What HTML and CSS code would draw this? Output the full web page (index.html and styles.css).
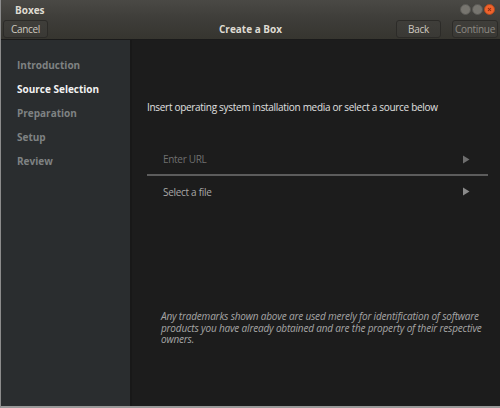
FILE: index.html
```html
<!DOCTYPE html>
<html>
<head>
<meta charset="utf-8">
<link rel="stylesheet" href="styles.css">
</head>
<body>
<div class="window">
  <div class="titlebar">
    <span class="title">Boxes</span>
    <div class="wm-buttons">
      <span class="wm wm-min"></span>
      <span class="wm wm-max"></span>
      <span class="wm wm-close">
        <svg width="12" height="12" viewBox="0 0 12 12"><path d="M4 4 L8 8 M8 4 L4 8" stroke="#8a2a10" stroke-width="1.4"/></svg>
      </span>
    </div>
  </div>
  <div class="headerbar">
    <button class="btn btn-cancel">Cancel</button>
    <div class="hb-title">Create a Box</div>
    <div class="hb-right">
      <button class="btn btn-back">Back</button>
      <button class="btn btn-disabled">Continue</button>
    </div>
  </div>
  <div class="main">
    <nav class="sidebar">
      <div class="step">Introduction</div>
      <div class="step active">Source Selection</div>
      <div class="step">Preparation</div>
      <div class="step">Setup</div>
      <div class="step">Review</div>
    </nav>
    <section class="content">
      <p class="intro">Insert operating system installation media or select a source below</p>
      <div class="sources">
        <div class="source url">
          <span>Enter URL</span>
          <svg class="arrow" width="8" height="9" viewBox="0 0 8 9"><path d="M1 0.5 L7.5 4.5 L1 8.5 Z" fill="#6e6e6e"/></svg>
        </div>
        <div class="source file">
          <span>Select a file</span>
          <svg class="arrow" width="8" height="9" viewBox="0 0 8 9"><path d="M1 0.5 L7.5 4.5 L1 8.5 Z" fill="#8a8a8a"/></svg>
        </div>
      </div>
      <p class="notice">Any trademarks shown above are used merely for identification of software products you have already obtained and are the property of their respective owners.</p>
    </section>
  </div>
</div>
</body>
</html>
```
FILE: styles.css
```css
* { box-sizing: border-box; }
html, body { margin: 0; padding: 0; }
body {
  width: 500px;
  height: 408px;
  overflow: hidden;
  background: #1c1c1c;
  font-family: "Open Sans", "Liberation Sans", sans-serif;
}
.window {
  width: 500px;
  height: 408px;
  display: flex;
  flex-direction: column;
  border-left: 1px solid #8c8c8c;
  border-bottom: 2px solid #9a9a9a;
}
.titlebar {
  height: 19px;
  background: linear-gradient(#4a4945, #3e3d39);
  display: flex;
  align-items: center;
  justify-content: space-between;
  padding: 0 5px 0 14px;
}
.title {
  color: #dfdbd2;
  font-weight: bold;
  font-size: 10px;
}
.wm-buttons { display: flex; align-items: center; }
.wm {
  width: 11px;
  height: 11px;
  border-radius: 50%;
  background: #77756f;
  border: 1px solid #5a5955;
  margin-left: 1px;
  display: flex;
  align-items: center;
  justify-content: center;
}
.wm-close { background: #f0632c; border-color: #b04a20; }
.wm-close svg { width: 9px; height: 9px; }
.headerbar {
  height: 21px;
  background: linear-gradient(#3e3d39, #36352f);
  display: flex;
  align-items: center;
  justify-content: space-between;
  padding: 0 2px 0 2px;
  border-bottom: 1px solid #1a1a1a;
  position: relative;
}
.btn {
  font-family: "Open Sans", "Liberation Sans", sans-serif;
  font-size: 10px;
  letter-spacing: -0.3px;
  color: #cfcac0;
  background: linear-gradient(#3f3e3a, #3a3935);
  border: 1px solid #2c2b28;
  border-radius: 3px;
  height: 18px;
  width: 45px;
  padding: 0;
  text-align: center;
  line-height: 16px;
}
.btn-disabled { color: #8d8a83; width: 46px; }
.hb-title {
  color: #dfdbd2;
  font-weight: bold;
  font-size: 10px;
  position: absolute;
  left: 0; right: 0;
  text-align: center;
  pointer-events: none;
}
.hb-right { display: flex; gap: 11px; }
.main { flex: 1; display: flex; min-height: 0; }
.sidebar {
  width: 131px;
  background: #2a2d2f;
  border-right: 2px solid #181818;
  padding-top: 18px;
}
.step {
  color: #7f8283;
  font-weight: bold;
  font-size: 10px;
  padding-left: 16px;
  height: 24px;
  line-height: 14px;
}
.step.active { color: #f2f2f2; }
.content {
  flex: 1;
  background: #1c1c1c;
  padding: 0 5px 0 15px;
  display: flex;
  flex-direction: column;
}
.intro {
  margin: 60px 0 0 0;
  color: #e0e0e0;
  font-size: 10px;
  letter-spacing: -0.3px;
}
.sources { margin-top: 30px; margin-right: 7px; }
.source {
  display: flex;
  align-items: center;
  justify-content: space-between;
  height: 32px;
  padding: 0 18px 0 16px;
  font-size: 10px;
  letter-spacing: -0.3px;
}
.source.url { color: #6f6f6f; border-bottom: 2px solid #5c5c5c; }
.source.file { color: #a8a8a8; height: 31px; }
.notice {
  margin: 104px 3px 0 14px;
  color: #a6a6a6;
  font-size: 10px;
  font-style: italic;
  letter-spacing: -0.18px;
  line-height: 11.5px;
}
```
